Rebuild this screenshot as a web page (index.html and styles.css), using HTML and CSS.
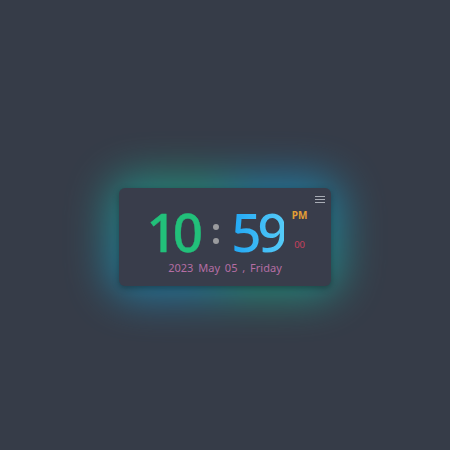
FILE: index.html
```html
<!DOCTYPE html>
<html>
<head>
<meta charset="utf-8">
<link rel="stylesheet" href="styles.css">
</head>
<body>
<div class="stage">
  <div class="clock">
    <div class="glow"></div>
    <div class="card">
      <div class="menu"><span></span><span></span><span></span></div>
      <div class="time">
        <span class="hours">10</span>
        <span class="colon"><i></i><i></i></span>
        <span class="minutes">59</span>
        <span class="side">
          <span class="ampm">PM</span>
          <span class="secs">00</span>
        </span>
      </div>
      <div class="date">2023 May 05 , Friday</div>
    </div>
  </div>
</div>
</body>
</html>
```
FILE: styles.css
```css
html, body {
  margin: 0;
  padding: 0;
  background: #363c48;
  width: 450px;
  height: 450px;
  overflow: hidden;
  font-family: "Noto Sans", "Open Sans", sans-serif;
}
.stage {
  width: 450px;
  height: 450px;
  display: flex;
  align-items: center;
  justify-content: center;
}
.clock {
  position: relative;
  width: 212px;
  height: 98px;
  margin-top: 24px;
}
.glow {
  position: absolute;
  left: -12px;
  top: -12px;
  right: -12px;
  bottom: -12px;
  border-radius: 28px;
  background: conic-gradient(from -40deg, #1fa882 0deg, #1a8cc4 90deg, #1fa882 180deg, #1a8cc4 270deg, #1fa882 360deg);
  filter: blur(20px);
  opacity: 0.7;
}
.card {
  position: relative;
  box-sizing: border-box;
  width: 212px;
  height: 98px;
  background: #393d4b;
  border-radius: 6px;
  box-shadow: 0 2px 6px rgba(0,0,0,0.35);
  display: flex;
  flex-direction: column;
  align-items: center;
  padding-top: 19px;
}
.menu {
  position: absolute;
  right: 6px;
  top: 8px;
  width: 10px;
  display: flex;
  flex-direction: column;
  gap: 2px;
}
.menu span {
  display: block;
  height: 1px;
  background: #a9adb6;
}
.time {
  display: flex;
  align-items: center;
  height: 50px;
  margin-left: 4px;
}
.hours, .minutes {
  font-size: 53px;
  line-height: 50px;
  letter-spacing: -4px;
  font-weight: 500;
  -webkit-text-stroke: 0.4px currentColor;
}
.hours {
  color: #22c07a;
}
.minutes {
  background: linear-gradient(90deg, #20a6f4, #55cbf8);
  -webkit-background-clip: text;
  background-clip: text;
  color: transparent;
  -webkit-text-stroke: 0;
}
.colon {
  display: flex;
  flex-direction: column;
  gap: 8px;
  margin: 4px 12px 0 14px;
}
.colon i {
  display: block;
  width: 6px;
  height: 6px;
  border-radius: 50%;
  background: #9a9b9e;
}
.side {
  display: flex;
  flex-direction: column;
  align-items: center;
  justify-content: space-between;
  height: 42px;
  margin-left: 8px;
  margin-top: -4px;
}
.ampm {
  font-size: 10px;
  font-weight: 700;
  color: #e4a035;
  line-height: 12px;
}
.secs {
  font-size: 9.5px;
  color: #c8405c;
  line-height: 12px;
}
.date {
  font-size: 11px;
  color: #b56ea4;
  margin-top: 4px;
  line-height: 14px;
  word-spacing: 2px;
}
```
